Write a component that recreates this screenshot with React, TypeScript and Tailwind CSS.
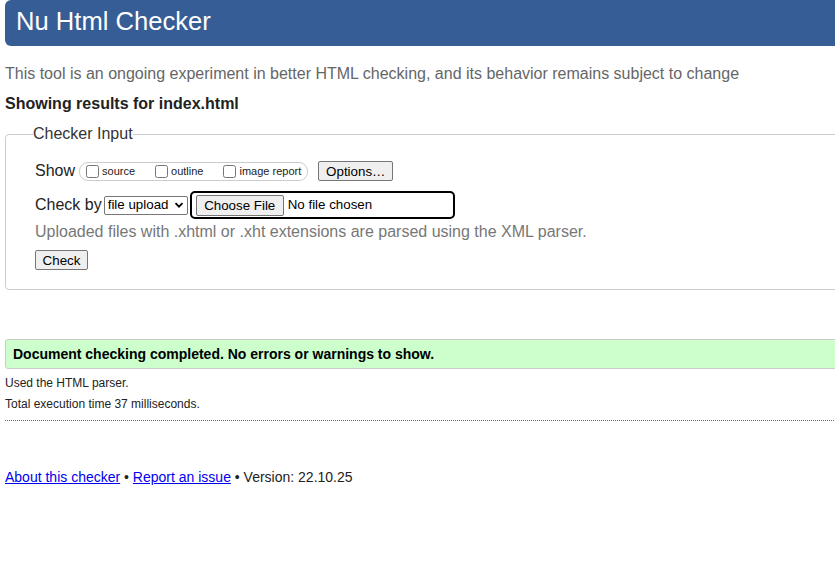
import React from 'react';

const font = "font-['Liberation_Sans',Arial,sans-serif]";

function Box({ label }: { label: string }) {
  return (
    <label className="flex items-center">
      <input type="checkbox" className="m-0 h-[13px] w-[13px]" />
      <span className="ml-[3px] text-[11px] text-[#222]">{label}</span>
    </label>
  );
}

export default function App() {
  return (
    <div className={`w-[835px] h-[575px] overflow-hidden bg-white ${font}`}>
      <div className="w-[900px] pl-[5px]">
        {/* Header */}
        <div className="h-[46px] rounded-l-[6px] bg-[#365d95] pl-[11px] flex items-center">
          <h1 className="text-[25.6px] leading-none text-white pb-[2px]">Nu Html Checker</h1>
        </div>

        <p className="mt-[19px] text-[16px] leading-[18px] text-[#666]">
          This tool is an ongoing experiment in better HTML checking, and its behavior remains subject to change
        </p>
        <p className="mt-[12px] text-[16px] leading-[18px] font-bold text-[#222]">Showing results for index.html</p>

        {/* Checker input */}
        <fieldset className="mt-[12px] border border-[#ccc] rounded-[4px] pl-[27px] pb-[17px]">
          <legend className="text-[16px] leading-[18px] text-[#333] px-0 ml-0">Checker Input</legend>
          <div className="pl-[2px]">
            <div className="mt-[17px] h-[22px] flex items-center">
              <span className="text-[16px] text-[#222]">Show</span>
              <div className="ml-[4px] h-[19px] flex items-center gap-[20px] border border-[#ccc] rounded-[9px] pl-[6px] pr-[6px]">
                <Box label="source" />
                <Box label="outline" />
                <Box label="image report" />
              </div>
              <button className="ml-[10px] h-[20px] w-[75px] bg-[#efefef] border border-[#767676] rounded-[2px] text-[13.33px] text-black">
                Options…
              </button>
            </div>

            <div className="mt-[9px] h-[28px] flex items-center">
              <span className="text-[16px] text-[#222]">Check by</span>
              <div className="ml-[2px] h-[19px] w-[84px] border border-[#767676] rounded-[2px] flex items-center pl-[3px] pr-[3px]">
                <span className="text-[13.33px] text-black flex-1">file upload</span>
                <svg width="10" height="10" viewBox="0 0 10 10">
                  <path d="M1.5 3.2 5 6.7 8.5 3.2" fill="none" stroke="#000" strokeWidth="1.8" />
                </svg>
              </div>
              <div className="ml-[2px] h-[28px] w-[265px] border-2 border-black rounded-[5px] flex items-center pl-[4px]">
                <button className="h-[21px] w-[88px] bg-[#efefef] border border-[#767676] rounded-[2px] text-[13.33px] text-black">
                  Choose File
                </button>
                <span className="ml-[4px] text-[13.33px] text-black">No file chosen</span>
              </div>
            </div>

            <p className="mt-[4px] text-[16px] leading-[18px] text-[#777]">
              Uploaded files with .xhtml or .xht extensions are parsed using the XML parser.
            </p>

            <button className="mt-[9px] h-[20px] w-[53px] bg-[#efefef] border border-[#767676] rounded-[2px] text-[13.33px] text-black">
              Check
            </button>
          </div>
        </fieldset>

        {/* Result */}
        <div className="mt-[49px] h-[30px] bg-[#ccffcc] border border-[#ccc] rounded-l-[3px] pl-[7px] flex items-center">
          <span className="text-[14px] font-bold text-black">Document checking completed. No errors or warnings to show.</span>
        </div>
        <p className="mt-[7px] text-[12px] leading-[14px] text-[#222]">Used the HTML parser.</p>
        <p className="mt-[7px] text-[12px] leading-[14px] text-[#222]">Total execution time 37 milliseconds.</p>
        <div className="mt-[9px] border-b border-dotted border-[#666]" />

        <p className="mt-[48px] text-[14px] leading-[16px] text-[#222]">
          <a href="#" className="text-[#0000ee] underline">About this checker</a>
          {' • '}
          <a href="#" className="text-[#0000ee] underline">Report an issue</a>
          {' • Version: 22.10.25'}
        </p>
      </div>
    </div>
  );
}
